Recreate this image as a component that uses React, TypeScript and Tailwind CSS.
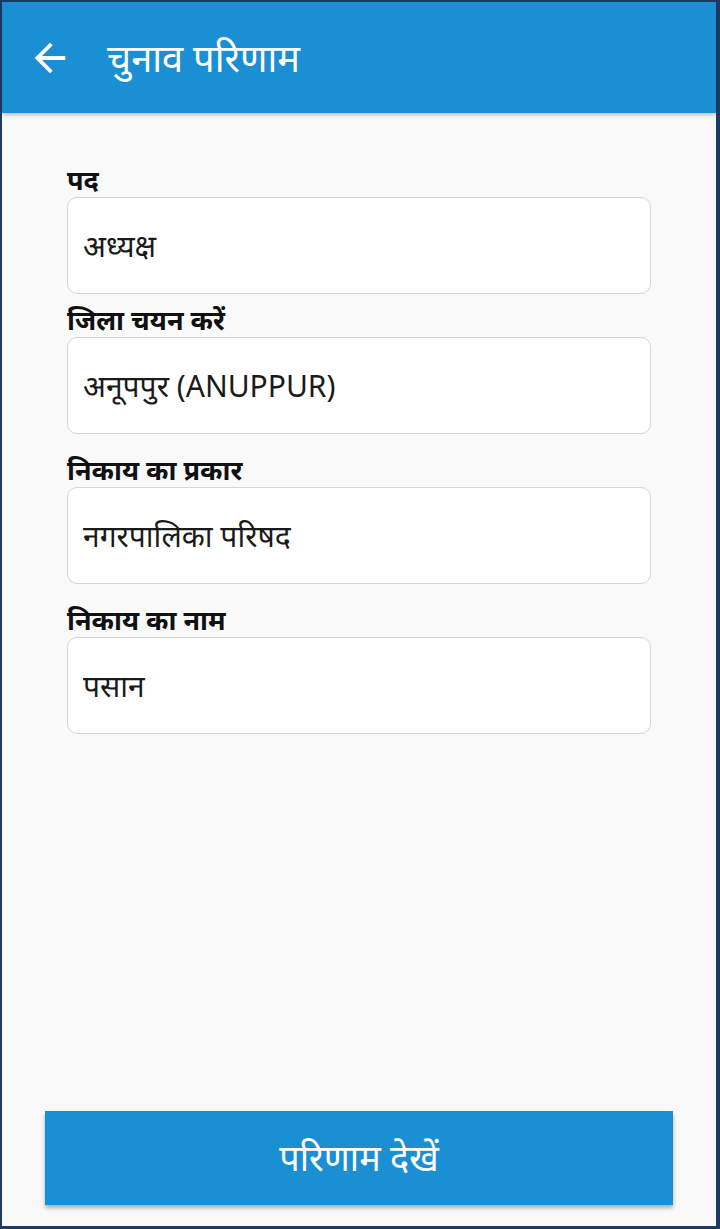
import React from "react";

const font = { fontFamily: '"Noto Sans", "Noto Sans Devanagari", "Lohit Devanagari", "FreeSans", sans-serif' };

function Field({ label, value, mt }: { label: string; value: string; mt: string }) {
  return (
    <div className={`${mt} flex flex-col`}>
      <div className="text-[27px] font-bold leading-[34px] h-[34px] text-[#111] whitespace-nowrap">{label}</div>
      <div className="h-[97px] rounded-[10px] border border-[#d4d4d4] bg-white flex items-center px-[15px]">
        <span className="text-[30px] text-[#1a1a1a] whitespace-nowrap">{value}</span>
      </div>
    </div>
  );
}

export default function App() {
  return (
    <div className="w-[720px] h-[1229px] bg-[#1d3b66] pt-[2px] pl-[2px] pr-[4px] pb-[3px]" style={font}>
      <div className="w-full h-full bg-[#f9f9f9] flex flex-col">
        <div className="h-[111px] bg-[#1b8fd3] flex items-center shadow-[0_2px_4px_rgba(0,0,0,0.25)] relative z-10">
          <svg className="ml-[25px]" width="46" height="46" viewBox="0 0 24 24" fill="white">
            <path d="M20 11H7.83l5.59-5.59L12 4l-8 8 8 8 1.41-1.41L7.83 13H20v-2z" />
          </svg>
          <div className="ml-[34px] text-[38px] text-white leading-none -mt-[2px] whitespace-nowrap">चुनाव परिणाम</div>
        </div>
        <div className="flex-1 flex flex-col px-[65px]">
          <Field mt="mt-[50px]" label="पद" value="अध्यक्ष" />
          <Field mt="mt-[9px]" label="जिला चयन करें" value="अनूपपुर (ANUPPUR)" />
          <Field mt="mt-[19px]" label="निकाय का प्रकार" value="नगरपालिका परिषद" />
          <Field mt="mt-[19px]" label="निकाय का नाम" value="पसान" />
        </div>
        <div className="px-[43px] pb-[21px]">
          <div className="h-[94px] bg-[#1b8fd3] flex items-center justify-center shadow-[0_3px_4px_rgba(0,0,0,0.3)]">
            <span className="text-[36px] text-white">परिणाम देखें</span>
          </div>
        </div>
      </div>
    </div>
  );
}
